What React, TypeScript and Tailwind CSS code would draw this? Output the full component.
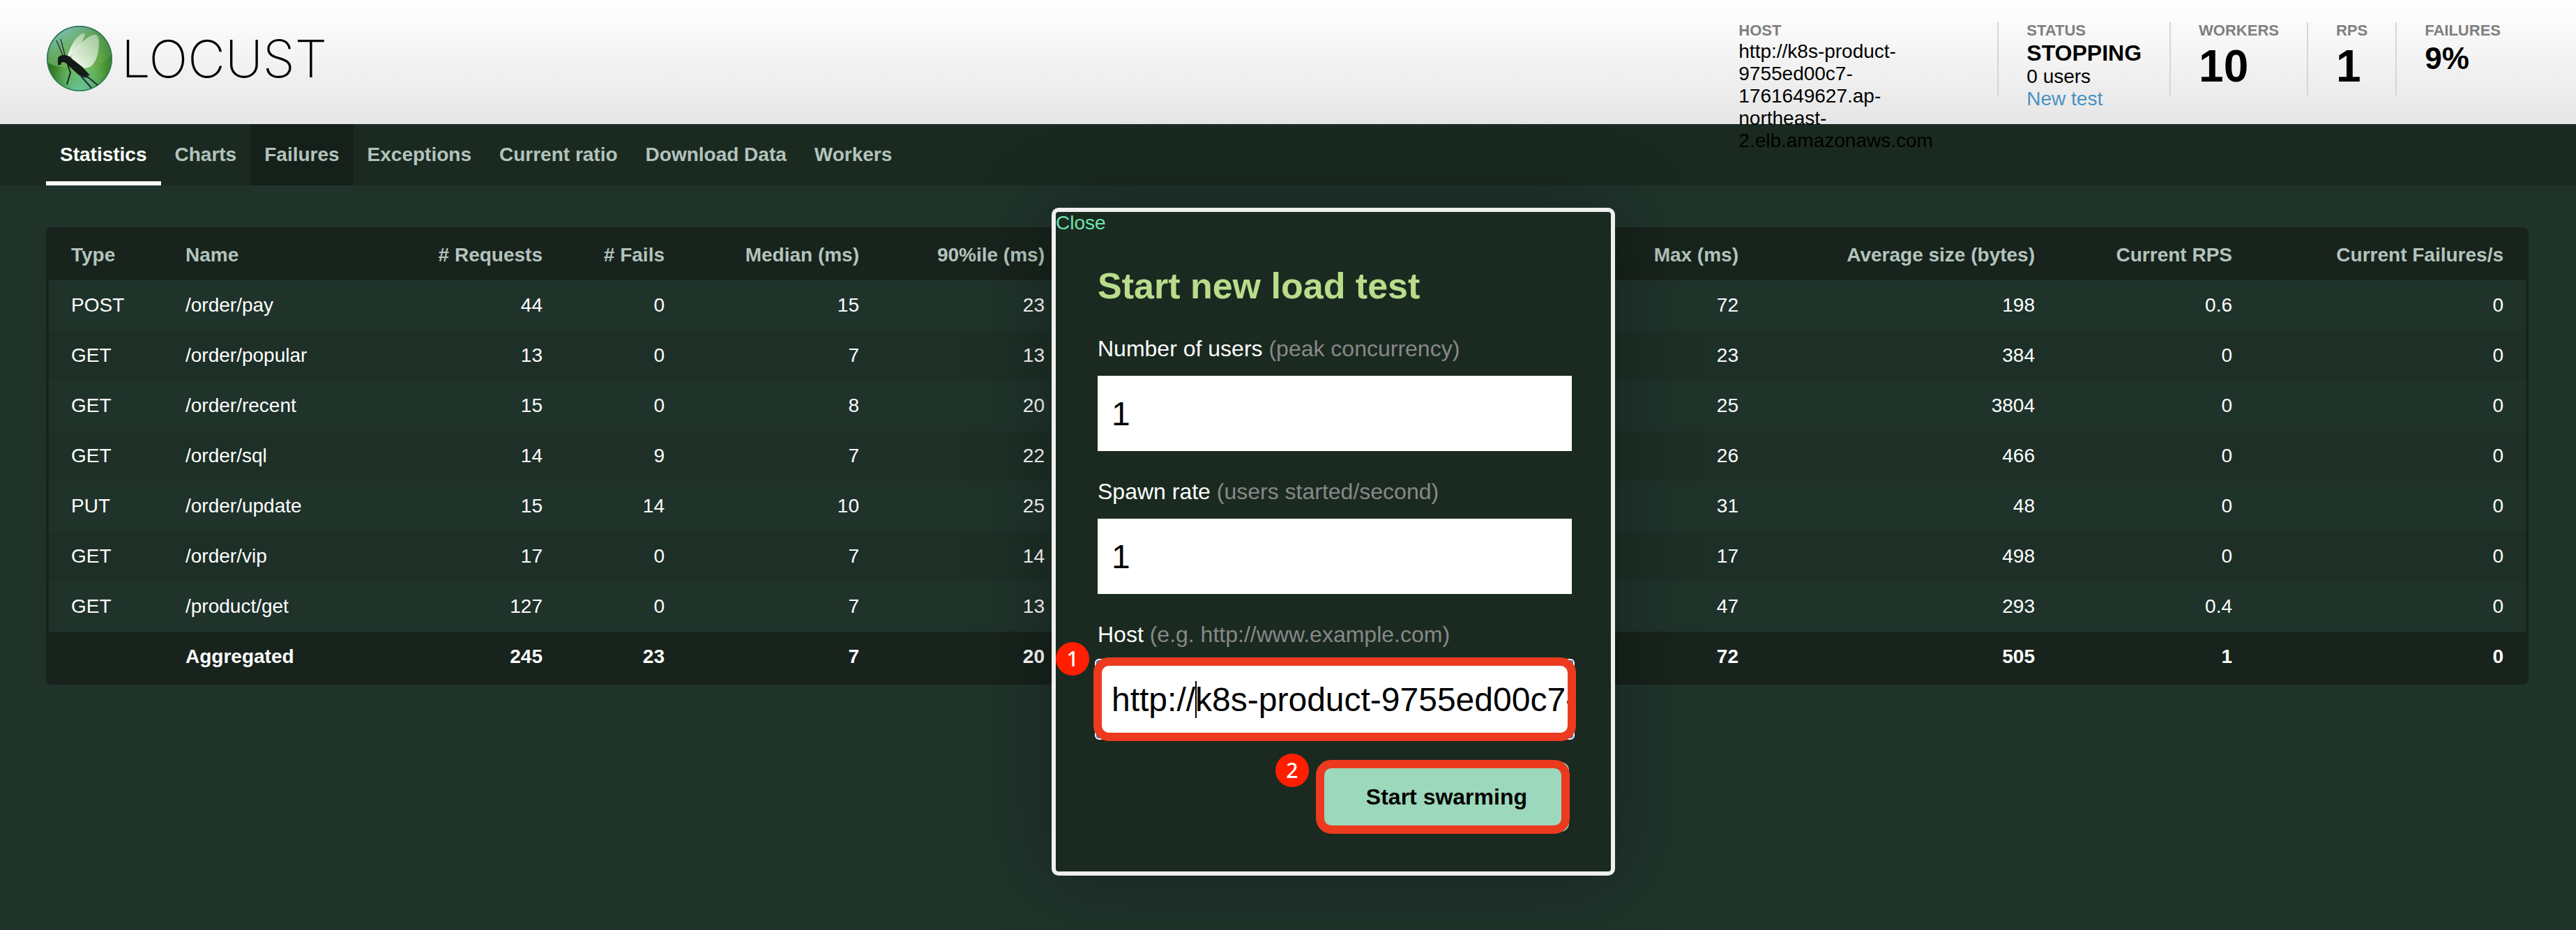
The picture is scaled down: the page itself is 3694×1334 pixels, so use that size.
import React from "react";

const stats = [
  ["POST", "/order/pay", "44", "0", "15", "23", "72", "20", "9", "72", "198", "0.6", "0"],
  ["GET", "/order/popular", "13", "0", "7", "13", "23", "9", "5", "23", "384", "0", "0"],
  ["GET", "/order/recent", "15", "0", "8", "20", "25", "10", "5", "25", "3804", "0", "0"],
  ["GET", "/order/sql", "14", "9", "7", "22", "26", "10", "5", "26", "466", "0", "0"],
  ["PUT", "/order/update", "15", "14", "10", "25", "31", "13", "6", "31", "48", "0", "0"],
  ["GET", "/order/vip", "17", "0", "7", "14", "17", "8", "5", "17", "498", "0", "0"],
  ["GET", "/product/get", "127", "0", "7", "13", "47", "8", "4", "47", "293", "0.4", "0"],
];
const total = ["", "Aggregated", "245", "23", "7", "20", "72", "10", "4", "72", "505", "1", "0"];

const columns = [
  { label: "Type", width: "w-[164px]" },
  { label: "Name", width: "w-[336px]" },
  { label: "# Requests", width: "w-[240px]" },
  { label: "# Fails", width: "w-[175px]" },
  { label: "Median (ms)", width: "w-[279px]" },
  { label: "90%ile (ms)", width: "w-[266px]" },
  { label: "99%ile (ms)", width: "w-[266px]" },
  { label: "Average (ms)", width: "w-[280px]" },
  { label: "Min (ms)", width: "w-[220px]" },
  { label: "Max (ms)", width: "w-[229px]" },
  { label: "Average size (bytes)", width: "w-[425px]" },
  { label: "Current RPS", width: "w-[283px]" },
  { label: "Current Failures/s", width: "w-[389px]" },
];

const tabs = ["Statistics", "Charts", "Failures", "Exceptions", "Current ratio", "Download Data", "Workers"];

const HOST = "http://k8s-product-9755ed00c7-1761649627.ap-northeast-2.elb.amazonaws.com";

function tabStyle(name: string) {
  if (name === "Statistics") return "border-white text-white";
  if (name === "Failures") return "border-transparent bg-[#15201a] bg-clip-border text-[#b3c3bc]";
  return "border-transparent text-[#b3c3bc]";
}

function Logo() {
  return (
    <a href="#" className="flex items-center gap-3 text-black">
      <svg viewBox="0 0 96 96" className="size-24" aria-hidden="true">
        <defs>
          <radialGradient id="ball" cx="0.55" cy="0.62" r="0.62">
            <stop offset="0" stopColor="#7cc558" />
            <stop offset="0.45" stopColor="#58a03a" />
            <stop offset="0.8" stopColor="#2f7424" />
            <stop offset="1" stopColor="#0c330c" />
          </radialGradient>
          <linearGradient id="gloss" x1="0.1" y1="0.1" x2="0.8" y2="0.9">
            <stop offset="0" stopColor="#8fdcea" stopOpacity="0.9" />
            <stop offset="0.4" stopColor="#86c686" stopOpacity="0.65" />
            <stop offset="1" stopColor="#6db560" stopOpacity="0.3" />
          </linearGradient>
          <radialGradient id="glow" cx="0.5" cy="1" r="0.5">
            <stop offset="0" stopColor="#6cc9a0" stopOpacity="0.95" />
            <stop offset="1" stopColor="#6cc9a0" stopOpacity="0" />
          </radialGradient>
          <linearGradient id="wing" x1="0" y1="1" x2="1" y2="0">
            <stop offset="0" stopColor="#ffffff" />
            <stop offset="0.35" stopColor="#ffffff" stopOpacity="0.7" />
            <stop offset="1" stopColor="#ffffff" stopOpacity="0.4" />
          </linearGradient>
        </defs>
        <circle cx="48" cy="48" r="47" fill="url(#ball)" />
        <circle cx="48" cy="48" r="46" fill="url(#glow)" />
        <path d="M2 54 A46 46 0 1 1 94 42 Q78 62 48 62 Q18 62 2 54Z" fill="url(#gloss)" />
        <circle cx="48" cy="48" r="46" fill="none" stroke="#2c7f5c" strokeWidth="1.5" />
        <path d="M31 44 Q38 20 52 12 Q57 10 55 17 Q50 30 34 46Z" fill="url(#wing)" />
        <path d="M35 47 Q50 20 68 14 Q76 12 76 26 Q75 52 63 60 Q52 64 44 58Z" fill="url(#wing)" />
        <path d="M17 47 Q21 42 28 43 Q34 44 38 49 L52 60 L63 72 L58 73 L60 76 Q48 74 43 68 L31 57 Q26 51 22 54 L21 57 L17 57Z" fill="#141a16" />
        <path d="M24 43 L15 22 M27 43 L21 20" stroke="#22323a" strokeWidth="1.4" fill="none" />
        <path d="M31 57 L35 68 L30 85" stroke="#17251a" strokeWidth="2" fill="none" />
        <path d="M50 73 L65 90 M57 72 L74 86" stroke="#1c2840" strokeWidth="2" fill="none" />
      </svg>
      <span className="font-['Inter'] text-[74px] leading-none font-extralight">LOCUST</span>
    </a>
  );
}

function Stat({ label, children }: { label: string; children: React.ReactNode }) {
  return (
    <div className="h-[106px] border-l-2 border-[#d6d6d6] px-10 first:border-l-0 last:pr-0">
      <div className="mb-0.5 text-[22px] leading-6 font-bold text-[#7f7f7f]">{label}</div>
      {children}
    </div>
  );
}

function Badge({ children, place }: { children: React.ReactNode; place: string }) {
  return (
    <span
      className={`absolute flex size-12 items-center justify-center rounded-full bg-[#ff1f00] font-['Noto_Sans'] text-[30px] leading-none font-medium text-white ${place}`}
    >
      {children}
    </span>
  );
}

function Field({ id, label, hint, children }: { id: string; label: string; hint: string; children: React.ReactNode }) {
  return (
    <div className="mb-[23px]">
      <label htmlFor={id} className="block pt-4 pb-5 text-[32px] leading-[38px] text-white">
        {label} <span className="text-[#888888]">{hint}</span>
      </label>
      {children}
    </div>
  );
}

const inputStyle = "block h-[108px] w-full bg-white pl-5 text-[48px] text-black outline-none";

export default function App() {
  return (
    <div className="relative min-h-screen bg-[#1f332b] font-['Liberation_Sans',Arial,sans-serif] text-[28px] leading-8">
      <header className="flex h-[178px] items-start justify-between bg-linear-to-b from-white to-[#e6e6e6] pr-[68px] pl-[66px]">
        <div className="flex h-[168px] items-center">
          <Logo />
        </div>
        <div className="relative z-10 flex pt-8 pr-10 text-black">
          <Stat label="HOST">
            <div className="w-[331px] pr-5">{HOST}</div>
          </Stat>
          <Stat label="STATUS">
            <div className="text-[32px] leading-9 font-bold">STOPPING</div>
            <div>0 users</div>
            <a href="#new-test" className="text-[#4a90c2]">New test</a>
          </Stat>
          <Stat label="WORKERS">
            <div className="text-[64px] leading-[74px] font-bold">10</div>
          </Stat>
          <Stat label="RPS">
            <div className="text-[64px] leading-[74px] font-bold">1</div>
          </Stat>
          <Stat label="FAILURES">
            <div className="text-[44px] leading-[52px] font-bold">9%</div>
          </Stat>
        </div>
      </header>

      <nav className="flex h-[88px] bg-[#1a2a21] px-[66px]">
        {tabs.map((t) => (
          <a key={t} href={`#${t}`} className={`border-b-6 px-5 pt-7 font-bold ${tabStyle(t)}`}>
            {t}
          </a>
        ))}
      </nav>

      <main className="pt-[60px] pr-[68px] pl-[66px]">
        <div className="overflow-hidden rounded-lg border-4 border-[#17231c]">
          <table className="w-full table-fixed border-collapse text-white">
            <thead className="bg-[#17231c] text-[#b3c3bc]">
              <tr className="h-[72px]">
                {columns.map((c, i) => (
                  <th key={c.label} className={`px-8 font-bold whitespace-nowrap ${c.width} ${i < 2 ? "text-left" : "text-right"}`}>
                    {c.label}
                  </th>
                ))}
              </tr>
            </thead>
            <tbody>
              {stats.map((row) => (
                <tr key={row[1]} className="h-[72px] even:bg-[#1d2f27]">
                  {row.map((cell, i) => (
                    <td key={i} className={`px-8 ${i < 2 ? "text-left" : "text-right"}`}>{cell}</td>
                  ))}
                </tr>
              ))}
            </tbody>
            <tfoot className="bg-[#17231c] font-bold">
              <tr className="h-[72px]">
                {total.map((cell, i) => (
                  <td key={i} className={`px-8 ${i < 2 ? "text-left" : "text-right"}`}>{cell}</td>
                ))}
              </tr>
            </tfoot>
          </table>
        </div>
      </main>

      <section
        role="dialog"
        aria-labelledby="dialog-title"
        className="absolute top-[298px] left-1/2 -ml-[339px] w-[808px] rounded-[10px] border-6 border-[#eeefee] bg-[#1a2a21] pb-[57px] shadow-[0_0_120px_rgba(0,0,0,0.3)]"
      >
        <a href="#close" className="block w-fit text-[#6fe3ab]">Close</a>
        <form className="pt-[43px] pr-14 pl-[60px]" onSubmit={(e) => e.preventDefault()}>
          <h2 id="dialog-title" className="mb-6 text-[52px] leading-[62px] font-bold text-[#b9dc8b]">Start new load test</h2>
          <Field id="users" label="Number of users" hint="(peak concurrency)">
            <input id="users" type="text" defaultValue="1" className={inputStyle} />
          </Field>
          <Field id="rate" label="Spawn rate" hint="(users started/second)">
            <input id="rate" type="text" defaultValue="1" className={inputStyle} />
          </Field>
          <Field id="host" label="Host" hint="(e.g. http://www.example.com)">
            <div className="relative">
              <input id="host" type="text" defaultValue={HOST} className={`${inputStyle} rounded-xs ring-2 ring-[#2f6fd0]`} />
              <span className="pointer-events-none absolute -inset-1 rounded-md border-2 border-white" />
              <span className="absolute top-7 left-[140px] h-[53px] w-[2px] bg-black" />
              <span className="pointer-events-none absolute -inset-[6px] rounded-[22px] border-12 border-[#eb3a1e]" />
              <Badge place="-top-7 -left-[60px]">1</Badge>
            </div>
          </Field>
          <div className="flex justify-end pt-[13px] pr-1">
            <div className="relative">
              <button type="submit" className="block h-[100px] rounded-xl bg-[#9cd8bc] px-[60px] text-[32px] font-bold text-black">
                Start swarming
              </button>
              <span className="pointer-events-none absolute -inset-y-[3px] -right-px -left-3 rounded-[22px] border-12 border-[#eb3a1e]" />
              <Badge place="-top-3 -left-[70px]">2</Badge>
            </div>
          </div>
        </form>
      </section>
    </div>
  );
}
